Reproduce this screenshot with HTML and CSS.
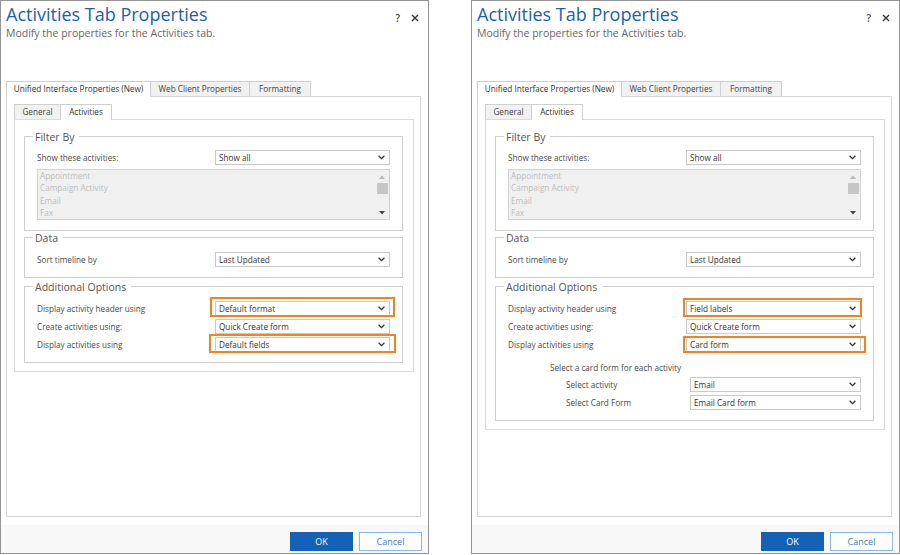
FILE: index.html
```html
<!DOCTYPE html>
<html lang="en">
<head>
<meta charset="utf-8">
<title>Activities Tab Properties</title>
<link rel="stylesheet" href="styles.css">
</head>
<body>
<div class="stage">

  <section class="dialog">
    <header class="dlg-head">
      <div class="titles">
        <h1 class="title">Activities Tab Properties</h1>
        <p class="subtitle">Modify the properties for the Activities tab.</p>
      </div>
      <div class="head-icons">
        <span class="help">?</span>
        <svg class="close" width="8" height="8" viewBox="0 0 8 8"><path d="M1 1L7 7M7 1L1 7" stroke="#333" stroke-width="1.4" fill="none"/></svg>
      </div>
    </header>

    <div class="tabs outer-tabs">
      <div class="tab first active t-uni">Unified Interface Properties (New)</div>
      <div class="tab t-web">Web Client Properties</div>
      <div class="tab t-fmt">Formatting</div>
    </div>

    <div class="outer-panel">
      <div class="tabs sub-tabs">
        <div class="tab first t-gen">General</div>
        <div class="tab active t-act">Activities</div>
      </div>
      <div class="inner-panel">
        <div class="group">
          <div class="legend">Filter By</div>
          <div class="rows first-rows">
            <div class="row"><span class="label">Show these activities:</span>
              <div class="select"><span>Show all</span><svg width="7" height="5" viewBox="0 0 7 5"><path d="M0.6 0.8L3.5 3.7L6.4 0.8" fill="none" stroke="#333" stroke-width="1.3"/></svg></div>
            </div>
          </div>
          <div class="listbox">
            <div class="items">
              <div>Appointment</div>
              <div>Campaign Activity</div>
              <div>Email</div>
              <div>Fax</div>
            </div>
            <div class="scroll">
              <svg width="6" height="4" viewBox="0 0 6 4"><path d="M0 4L3 0.5L6 4Z" fill="#b8b8b8"/></svg>
              <div class="thumb"></div>
              <svg class="down" width="6" height="4" viewBox="0 0 6 4"><path d="M0 0L6 0L3 3.6Z" fill="#444"/></svg>
            </div>
          </div>
        </div>

        <div class="group g-data">
          <div class="legend">Data</div>
          <div class="rows">
            <div class="row"><span class="label">Sort timeline by</span>
              <div class="select"><span>Last Updated</span><svg width="7" height="5" viewBox="0 0 7 5"><path d="M0.6 0.8L3.5 3.7L6.4 0.8" fill="none" stroke="#333" stroke-width="1.3"/></svg></div>
            </div>
          </div>
        </div>

        <div class="group g-add">
          <div class="legend">Additional Options</div>
          <div class="rows">
            <div class="row"><span class="label">Display activity header using</span>
              <div class="select"><span>Default format</span><svg width="7" height="5" viewBox="0 0 7 5"><path d="M0.6 0.8L3.5 3.7L6.4 0.8" fill="none" stroke="#333" stroke-width="1.3"/></svg><span class="hl"></span></div>
            </div>
            <div class="row"><span class="label">Create activities using:</span>
              <div class="select"><span>Quick Create form</span><svg width="7" height="5" viewBox="0 0 7 5"><path d="M0.6 0.8L3.5 3.7L6.4 0.8" fill="none" stroke="#333" stroke-width="1.3"/></svg></div>
            </div>
            <div class="row"><span class="label">Display activities using</span>
              <div class="select"><span>Default fields</span><svg width="7" height="5" viewBox="0 0 7 5"><path d="M0.6 0.8L3.5 3.7L6.4 0.8" fill="none" stroke="#333" stroke-width="1.3"/></svg><span class="hl l2"></span></div>
            </div>
          </div>
        </div>
      </div>
    </div>

    <footer class="dlg-foot">
      <button class="btn primary">OK</button>
      <button class="btn">Cancel</button>
    </footer>
  </section>

  <section class="dialog">
    <header class="dlg-head">
      <div class="titles">
        <h1 class="title">Activities Tab Properties</h1>
        <p class="subtitle">Modify the properties for the Activities tab.</p>
      </div>
      <div class="head-icons">
        <span class="help">?</span>
        <svg class="close" width="8" height="8" viewBox="0 0 8 8"><path d="M1 1L7 7M7 1L1 7" stroke="#333" stroke-width="1.4" fill="none"/></svg>
      </div>
    </header>

    <div class="tabs outer-tabs">
      <div class="tab first active t-uni">Unified Interface Properties (New)</div>
      <div class="tab t-web">Web Client Properties</div>
      <div class="tab t-fmt">Formatting</div>
    </div>

    <div class="outer-panel">
      <div class="tabs sub-tabs">
        <div class="tab first t-gen">General</div>
        <div class="tab active t-act">Activities</div>
      </div>
      <div class="inner-panel">
        <div class="group">
          <div class="legend">Filter By</div>
          <div class="rows first-rows">
            <div class="row"><span class="label">Show these activities:</span>
              <div class="select"><span>Show all</span><svg width="7" height="5" viewBox="0 0 7 5"><path d="M0.6 0.8L3.5 3.7L6.4 0.8" fill="none" stroke="#333" stroke-width="1.3"/></svg></div>
            </div>
          </div>
          <div class="listbox">
            <div class="items">
              <div>Appointment</div>
              <div>Campaign Activity</div>
              <div>Email</div>
              <div>Fax</div>
            </div>
            <div class="scroll">
              <svg width="6" height="4" viewBox="0 0 6 4"><path d="M0 4L3 0.5L6 4Z" fill="#b8b8b8"/></svg>
              <div class="thumb"></div>
              <svg class="down" width="6" height="4" viewBox="0 0 6 4"><path d="M0 0L6 0L3 3.6Z" fill="#444"/></svg>
            </div>
          </div>
        </div>

        <div class="group g-data">
          <div class="legend">Data</div>
          <div class="rows">
            <div class="row"><span class="label">Sort timeline by</span>
              <div class="select"><span>Last Updated</span><svg width="7" height="5" viewBox="0 0 7 5"><path d="M0.6 0.8L3.5 3.7L6.4 0.8" fill="none" stroke="#333" stroke-width="1.3"/></svg></div>
            </div>
          </div>
        </div>

        <div class="group g-add">
          <div class="legend">Additional Options</div>
          <div class="rows">
            <div class="row"><span class="label">Display activity header using</span>
              <div class="select"><span>Field labels</span><svg width="7" height="5" viewBox="0 0 7 5"><path d="M0.6 0.8L3.5 3.7L6.4 0.8" fill="none" stroke="#333" stroke-width="1.3"/></svg><span class="hl r1"></span></div>
            </div>
            <div class="row"><span class="label">Create activities using:</span>
              <div class="select"><span>Quick Create form</span><svg width="7" height="5" viewBox="0 0 7 5"><path d="M0.6 0.8L3.5 3.7L6.4 0.8" fill="none" stroke="#333" stroke-width="1.3"/></svg></div>
            </div>
            <div class="row"><span class="label">Display activities using</span>
              <div class="select"><span>Card form</span><svg width="7" height="5" viewBox="0 0 7 5"><path d="M0.6 0.8L3.5 3.7L6.4 0.8" fill="none" stroke="#333" stroke-width="1.3"/></svg><span class="hl r2"></span></div>
            </div>
          </div>
          <div class="card-head">Select a card form for each activity</div>
          <div class="rows sub-rows">
            <div class="row"><span class="label">Select activity</span>
              <div class="select narrow"><span>Email</span><svg width="7" height="5" viewBox="0 0 7 5"><path d="M0.6 0.8L3.5 3.7L6.4 0.8" fill="none" stroke="#333" stroke-width="1.3"/></svg></div>
            </div>
            <div class="row"><span class="label">Select Card Form</span>
              <div class="select narrow"><span>Email Card form</span><svg width="7" height="5" viewBox="0 0 7 5"><path d="M0.6 0.8L3.5 3.7L6.4 0.8" fill="none" stroke="#333" stroke-width="1.3"/></svg></div>
            </div>
          </div>
        </div>
      </div>
    </div>

    <footer class="dlg-foot">
      <button class="btn primary">OK</button>
      <button class="btn">Cancel</button>
    </footer>
  </section>

</div>
</body>
</html>
```

FILE: styles.css
```css
* { box-sizing: border-box; }

html, body {
  margin: 0;
  padding: 0;
  background: #ffffff;
}

body {
  font-family: "Open Sans", "Noto Sans", sans-serif;
  color: #444;
}

.stage {
  display: flex;
  gap: 42px;
  width: 900px;
  height: 555px;
}

.dialog {
  width: 429px;
  height: 554px;
  border: 1px solid #949494;
  display: flex;
  flex-direction: column;
  background: #fff;
}

/* header */
.dlg-head {
  height: 80px;
  flex: none;
  display: flex;
  justify-content: space-between;
  align-items: flex-start;
  padding: 1px 9px 0 5px;
}

.title {
  margin: 0;
  font-size: 18px;
  line-height: 24px;
  font-weight: 400;
  color: #1862b5;
}

.subtitle {
  margin: 0;
  font-size: 10.5px;
  line-height: 14px;
  color: #666;
}

.head-icons {
  display: flex;
  align-items: center;
  gap: 11px;
  margin-top: 11px;
}

.help {
  font-size: 10px;
  font-weight: 600;
  color: #444;
  line-height: 10px;
}

.close { display: block; }

/* tabs */
.tabs {
  display: flex;
  align-items: flex-start;
  height: 15px;
  flex: none;
}

.outer-tabs {
  margin-left: 5px;
}

.tab {
  height: 15px;
  border-top: 1px solid #cfcfcf;
  border-right: 1px solid #cfcfcf;
  background: #f1f1f1;
  font-size: 8.2px;
  line-height: 14px;
  color: #444;
  text-align: center;
  white-space: nowrap;
}

.tab.first { border-left: 1px solid #cfcfcf; }

.tab.active {
  position: relative;
  z-index: 1;
  height: 16px;
  margin-bottom: -1px;
  background: #fff;
  color: #333;
}

.t-uni { width: 145px; }
.t-web { width: 99px; }
.t-fmt { width: 61px; }
.t-gen { width: 47px; }
.t-act { width: 51px; }

/* panels */
.outer-panel {
  flex: 1;
  margin: 0 7px 8px 5px;
  border: 1px solid #d6d6d6;
  padding: 7px 6px 0 7px;
}

.inner-panel {
  border: 1px solid #dcdcdc;
  padding: 16px 10px 8px 9px;
}

.group {
  border: 1px solid #cfcfcf;
  padding: 0 12px 10px 12px;
}

.g-data { margin-top: 6px; }
.g-add { margin-top: 8px; }

.legend {
  width: fit-content;
  height: 14px;
  margin: -7px 0 0 -4px;
  padding: 0 5px 0 2px;
  background: #fff;
  font-size: 10.5px;
  line-height: 14px;
  color: #555;
}

.rows {
  display: flex;
  flex-direction: column;
  gap: 3px;
  margin-top: 7px;
}

.first-rows { margin-top: 6px; }

.row {
  display: flex;
  align-items: center;
  justify-content: space-between;
  height: 15px;
}

.label {
  font-size: 8.2px;
  color: #4a4a4a;
  white-space: nowrap;
}

.select {
  position: relative;
  width: 175px;
  height: 15px;
  border: 1px solid #c9c9c9;
  background: #fff;
  display: flex;
  align-items: center;
  justify-content: space-between;
  padding: 0 4px 0 3px;
  font-size: 8.2px;
  color: #333;
}

.select svg { display: block; }

.select.narrow { width: 171px; }

.hl {
  position: absolute;
  inset: -5px -6px -2px -6px;
  border: 2px solid #f5821f;
}

.hl.l2 { inset: -4px -7px -2px -7px; }
.hl.r1 { inset: -4px -2px -2px -4px; }
.hl.r2 { inset: -2px -6px -2px -4px; }

/* listbox */
.listbox {
  margin-top: 4px;
  height: 51px;
  border: 1px solid #d2d2d2;
  background: #f0f0f0;
  display: flex;
}

.items {
  flex: 1;
  padding-left: 2px;
  font-size: 8.2px;
  line-height: 12.3px;
  color: #bdbdbd;
}

.scroll {
  width: 14px;
  display: flex;
  flex-direction: column;
  align-items: center;
  padding: 5px 0 4px;
}

.scroll svg { display: block; }

.thumb {
  width: 11px;
  height: 11px;
  margin-top: 4px;
  background: #c6c6c6;
}

.scroll .down { margin-top: auto; }

/* card form section */
.card-head {
  margin-top: 10px;
  padding-left: 42px;
  font-size: 8.2px;
  line-height: 12px;
  color: #4a4a4a;
}

.sub-rows {
  margin-top: 3px;
  padding-left: 58px;
}

/* footer */
.dlg-foot {
  height: 28px;
  flex: none;
  background: #f8f8f8;
  display: flex;
  justify-content: flex-end;
  gap: 6px;
  padding: 7px 6px 0 0;
}

.btn {
  width: 63px;
  height: 19px;
  padding: 0;
  border: 1px solid #8db9ea;
  background: #fff;
  color: #3d7ccb;
  font-family: "Open Sans", "Noto Sans", sans-serif;
  font-size: 9px;
  line-height: 17px;
}

.btn.primary {
  background: #1462b8;
  border-color: #1462b8;
  color: #fff;
}
```
